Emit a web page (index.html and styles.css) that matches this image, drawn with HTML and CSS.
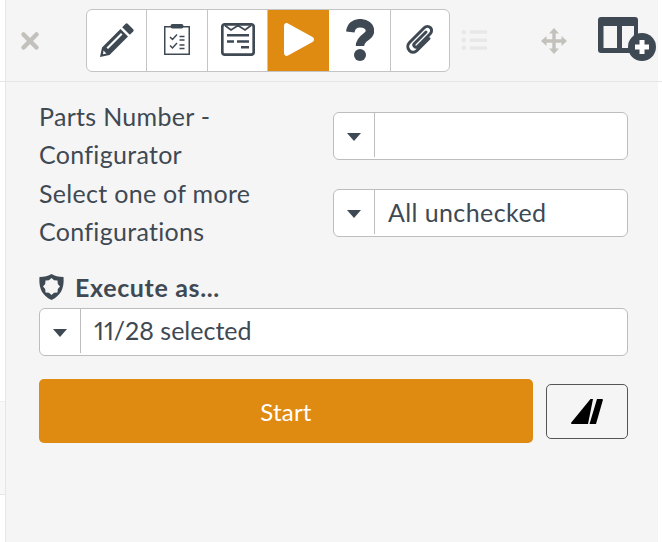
FILE: index.html
```html
<!DOCTYPE html>
<html lang="en">
<head>
<meta charset="utf-8">
<title>Configurator</title>
<link rel="stylesheet" href="styles.css">
</head>
<body>
<div class="outer">
  <aside class="edge"><div class="edge-top"></div><div class="edge-box"></div></aside>
  <main class="panel">
    <header class="toolbar">
      <svg class="ico close" viewBox="0 0 20 20"><path d="M3.500 3.500l13 13M16.500 3.500l-13 13"/></svg>
      <nav class="tabs">
        <div class="tab">
          <svg viewBox="0 0 34 34" width="34" height="34"><path class="dark" d="M25.600 .8a1.500 1.500 0 0 1 2.100 0l5.500 5.500a1.500 1.500 0 0 1 0 2.100l-3.400 3.400-7.600-7.600z"/><path class="dark" fill-rule="evenodd" d="M20.500 6 28 13.500 9.500 32 0 34l2-9.500zM21 10l1.500 1.500L8 26l-1.500-1.500zM3.500 27.500l3 3-3.500.8z"/></svg>
        </div>
        <div class="tab">
          <svg viewBox="0 0 26 31" width="26" height="31"><rect class="line" x=".75" y="2.750" width="24.500" height="27.500"/><rect class="dark" x="6.500" y="0" width="13" height="4.500" rx="2"/><path class="line" d="M6 13l2.500 2.500 4.500-5M6 21.500l2.500 2.500 4.500-5M15.500 12.500h5M15.500 16h5M15.500 21h5M15.500 24.500h5"/></svg>
        </div>
        <div class="tab">
          <svg viewBox="0 0 34 33" width="34" height="33"><rect class="frame" x="1.300" y="1.300" width="31.400" height="30.400" rx="2.500"/><polyline class="vee" points="4,2.500 10,7 17,2.500 24,7 30,2.500"/><path class="dark" d="M6 11h22v2.500H6zM6 17.300h7v2.500H6zM16 17.300h12v2.500H16zM20 23h8v2.500h-8z"/></svg>
        </div>
        <div class="tab active">
          <svg viewBox="0 0 30 33" width="30" height="33"><path class="white" d="M0 3C0 .8 2-.6 4 .5l24.500 13.500c2 1.100 2 3.900 0 5L4 32.500c-2 1.100-4-.3-4-2.500z"/></svg>
        </div>
        <div class="tab">
          <svg viewBox="0 0 28 42" width="28" height="42"><path class="quest" d="M4.300 13C5 7 9 4.200 14 4.200c6 0 10 3.300 10 7.800 0 6.500-10 6-10 15"/><circle class="dark" cx="14" cy="36" r="6"/></svg>
        </div>
        <div class="tab">
          <svg viewBox="0 0 30 33" width="30" height="33"><path class="clip" d="M21 9 9.500 20.500c-2 2 1 5 3 3L25 11c4.500-4.500-1.500-10.500-6-6L4.500 19.500c-5 5 2 13.500 7.500 8L24 15.500"/></svg>
        </div>
      </nav>
      <svg class="ico list" viewBox="0 0 27 22"><circle cx="3" cy="3" r="2.500"/><circle cx="3" cy="11" r="2.500"/><circle cx="3" cy="19" r="2.500"/><path d="M9 1h18v3.500H9zM9 9.500h18V13H9zM9 17.500h18V21H9z"/></svg>
      <svg class="ico move" viewBox="0 0 26 26"><path d="M13 0l5 5.500h-3.300v5.800h5.800V8l5.500 5-5.500 5v-3.300h-5.800v5.800H18L13 26l-5-5.500h3.300v-5.800H5.500V18L0 13l5.500-5v3.300h5.800V5.500H8z"/></svg>
      <svg class="ico layout" viewBox="0 0 58 44"><path class="dark" fill-rule="evenodd" d="M3 0h34a3 3 0 0 1 3 3v33H3a3 3 0 0 1-3-3V3a3 3 0 0 1 3-3zM5.500 9v22H19V9zM24 9v22h12V9z"/><circle class="dark" cx="44" cy="30" r="14"/><path class="white" d="M41.500 23h5v4.500H51v5h-4.500V37h-5v-4.500H37v-5h4.500z"/></svg>
    </header>
    <section class="form">
      <div class="row row-a">
        <label class="label">Parts Number - Configurator</label>
        <div class="select"><span class="caret"><i></i></span><span class="value"></span></div>
      </div>
      <div class="row row-b">
        <label class="label">Select one of more Configurations</label>
        <div class="select"><span class="caret"><i></i></span><span class="value">All unchecked</span></div>
      </div>
      <div class="exec-title">
        <svg class="shield" viewBox="0 0 25 26"><path class="dark" fill-rule="evenodd" d="M12.500 0c3 1.800 7 3 12 3 .7 9-1 18-12 23C1.500 21-.2 12 .5 3c5 0 9-1.200 12-3zM21 12.500l-2.200 2.600-.3 3.400-3.400.3-2.600 2.200-2.600-2.200-3.400-.3-.3-3.400L4 12.500l2.200-2.600.3-3.400 3.400-.3 2.600-2.200 2.600 2.200 3.400.3.300 3.400z"/></svg>
        <strong>Execute as...</strong>
      </div>
      <div class="select wide"><span class="caret"><i></i></span><span class="value">11/28 selected</span></div>
      <div class="actions">
        <button class="start" type="button">Start</button>
        <button class="alt" type="button"><svg viewBox="0 0 32 25" width="32" height="25"><path d="M19.500 0H22l-5 25H1c-1 0-1.300-.8-.7-1.500zM26 0h5c.7 0 1 .4.900 1L25 25h-6.500z"/></svg></button>
      </div>
    </section>
  </main>
</div>
</body>
</html>
```
FILE: styles.css
```css
* { box-sizing: border-box; }
html, body { margin: 0; height: 100%; }
body {
  background: #fff;
  font-family: "Lato", "Liberation Sans", sans-serif;
  color: #3f4953;
  overflow: hidden;
}
.outer { display: flex; height: 542px; width: 662px; }
.edge { width: 6px; flex: none; background: #fff; border-right: 1px solid #e6e6e6; }
.edge-top { height: 82px; border-bottom: 1px solid #e6e6e6; }
.edge-box { margin-top: 319px; height: 94px; background: #f8f8f8; border-top: 1px solid #eeeeee; border-bottom: 1px solid #e6e6e6; }
.panel { flex: none; width: 652px; background: #f5f5f5; }
.toolbar { height: 82px; border-bottom: 1px solid #e6e6e6; margin-right: -4px; padding: 9px 0 0 14px; display: flex; align-items: flex-start; }
.ico { flex: none; display: block; }
.dark { fill: #3f4953; }
.white { fill: #fff; }
.line { fill: none; stroke: #3f4953; stroke-width: 1.500; }
.frame { fill: none; stroke: #3f4953; stroke-width: 2.700; }
.vee { fill: none; stroke: #3f4953; stroke-width: 1.800; }
.quest { fill: none; stroke: #3f4953; stroke-width: 8.500; }
.clip { fill: none; stroke: #3f4953; stroke-width: 3; stroke-linecap: round; }
.close { width: 20px; height: 20px; margin-top: 22px; }
.close path { stroke: #c3c1bb; stroke-width: 4.500; stroke-linecap: round; fill: none; }
.tabs { display: grid; grid-template-columns: 60px 61px 60px 61px 62px 58px; height: 63px; margin-left: 46px; border: 1px solid #c4c4c4; border-radius: 6px; background: #fff; overflow: hidden; flex: none; }
.tab { display: flex; align-items: center; justify-content: center; padding-bottom: 2px; border-right: 1px solid #c4c4c4; }
.tab:last-child { border-right: 0; }
.tab.active { background: #df8b12; border-right-width: 0; }
.list { width: 26px; height: 22px; margin: 20px 0 0 11px; fill: #e8e8e8; }
.move { width: 26px; height: 26px; margin: 19px 0 0 54px; fill: #c3c1bb; }
.layout { width: 58px; height: 44px; margin: 8px 0 0 31px; }
.form { padding: 15px 30px 0 33px; }
.row { display: flex; align-items: center; justify-content: space-between; }
.row-b { margin-top: 1px; }
.row .select { margin-top: 2px; }
.label { width: 240px; font-size: 25px; line-height: 38px; letter-spacing: .3px; }
.select { width: 295px; height: 48px; background: #fff; border: 1px solid #bdbdbd; border-radius: 6px; display: flex; align-items: stretch; flex: none; }
.caret { width: 41px; flex: none; margin: 0 0 2px; border-right: 1px solid #bdbdbd; display: flex; align-items: center; justify-content: center; }
.caret i { display: block; width: 0; height: 0; margin-top: 3px; border-left: 7.500px solid transparent; border-right: 7.500px solid transparent; border-top: 8px solid #3f4953; }
.value { font-size: 25px; line-height: 44px; padding-left: 13px; white-space: nowrap; letter-spacing: .4px; font-variant-numeric: proportional-nums; }
.exec-title { display: flex; align-items: center; gap: 11px; margin-top: 20px; height: 34px; }
.exec-title strong { font-size: 25px; font-weight: 700; letter-spacing: .65px; }
.shield { width: 25px; height: 26px; flex: none; }
.select.wide { width: 589px; margin-top: 4px; }
.wide .value { line-height: 42px; letter-spacing: 0; }
.actions { display: flex; align-items: flex-start; justify-content: space-between; margin-top: 23px; }
.start { width: 494px; height: 64px; background: #df8b12; border: 0; border-radius: 5px; color: #fff; font: 24px "Lato", "Liberation Sans", sans-serif; letter-spacing: .2px; padding: 0; }
.alt { width: 82px; height: 55px; margin-top: 5px; background: transparent; border: 1px solid #555; border-radius: 5px; display: flex; align-items: center; justify-content: center; padding: 0; }
.alt svg { fill: #000; }
```
